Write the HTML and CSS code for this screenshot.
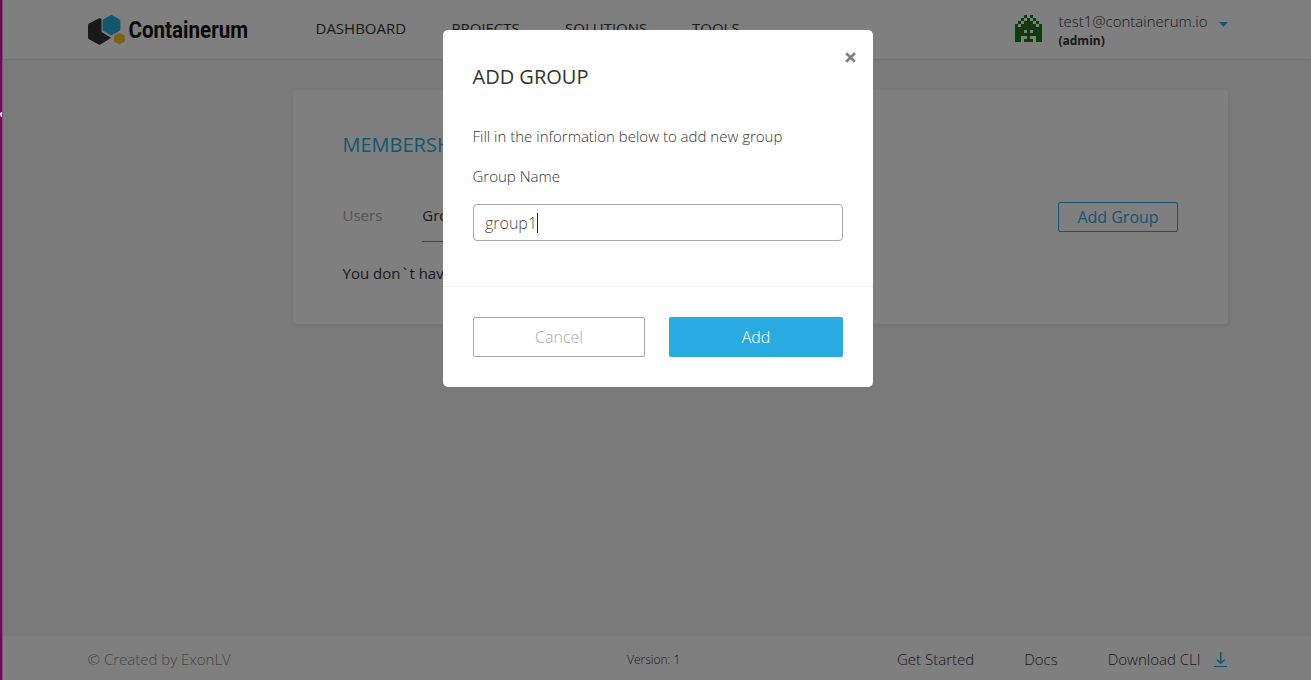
FILE: index.html
```
<!DOCTYPE html>
<html lang="en">
<head>
<meta charset="utf-8">
<title>Containerum</title>
<link rel="stylesheet" href="styles.css">
</head>
<body>
<div class="screen">
  <div class="edge"><span class="edge-mark"></span></div>
  <div class="app">
    <header class="header">
      <div class="container header-row">
        <svg class="logo" width="162" height="34" viewBox="0 0 162 34">
          <path d="M1 8.6 11.5 3 13.5 4V17L23.2 22.8 11.7 30 1 24.3Q0 23.7 0 22.6V10.3Q0 9.200 1 8.600Z" fill="#333"/>
          <path d="M22.500.3Q23.400-.1 24.300.3L31.300 4.200Q32.300 4.800 32.300 5.800V14.500Q32.300 15.500 31.300 16.100L24.300 20Q23.400 20.400 22.500 20L15.500 16.100Q14.600 15.500 14.600 14.500V5.800Q14.600 4.800 15.500 4.200Z" fill="#29abe2"/>
          <path d="M31.500 17.700 36.800 20.700V26.500L31.500 29.400 26 26.500V20.700Z" fill="#fbc52d"/>
          <text class="logo-text" x="40.500" y="23.300" textLength="119.500" lengthAdjust="spacingAndGlyphs">Containerum</text>
        </svg>
        <nav class="nav">
          <a class="nav-dashboard">DASHBOARD</a><a class="nav-projects">PROJECTS</a><a class="nav-solutions">SOLUTIONS</a><a>TOOLS</a>
        </nav>
        <div class="account">
          <svg class="avatar" width="27" height="27" viewBox="0 0 9 9" shape-rendering="crispEdges">
            <path fill="#0b820b" d="M3 0h1v1H3zM5 0h1v1H5zM2 1h1v1H2zM4 1h1v1H4zM6 1h1v1H6zM1 2h1v1H1zM3 2h3v1H3zM7 2h1v1H7zM0 3h1v1H0zM2 3h5v1H2zM8 3h1v1H8zM0 4h4v1H0zM4 4h1v1H4zM5 4h4v1H5zM0 5h3v1H0zM4 5h1v1H4zM6 5h3v1H6zM0 6h9v1H0zM0 7h2v1H0zM4 7h1v1H4zM7 7h2v1H7zM0 8h2v1H0zM3 8h3v1H3zM7 8h2v1H7z"/>
            <path fill="#c8145a" d="M4 2h1v2H4zM2 5h1v1H2zM6 5h1v1H6zM4 8h1v1H4z"/>
          </svg>
          <div class="user"><div class="email">test1@containerum.io</div><div class="role">(admin)</div></div>
          <svg class="caret" width="9" height="5" viewBox="0 0 9 5"><path d="M0 0H9L4.500 4.800Z" fill="#29abe2"/></svg>
        </div>
      </div>
    </header>
    <main class="main">
      <section class="card">
        <h1 class="card-title">MEMBERSHIP</h1>
        <div class="tabs-row">
          <div class="tabs"><span class="tab">Users</span><span class="tab tab-active">Groups</span></div>
          <button class="add-group">Add Group</button>
        </div>
        <p class="empty">You don<span class="tick">`</span>t have groups</p>
      </section>
    </main>
    <footer class="footer">
      <div class="container footer-row">
        <div class="copyright">© Created by ExonLV</div>
        <div class="version">Version: 1</div>
        <div class="links"><a>Get Started</a><a>Docs</a><a class="download">Download CLI
          <svg class="download-icon" width="13" height="15" viewBox="0 0 13 15" fill="none" stroke="#29abe2"><path d="M6.800 0V11" stroke-width="1.700"/><path d="M3 7.700 6.800 11.300 10.600 7.700" stroke-width="1.500"/><path d="M0 14.500H13" stroke-width="1"/></svg></a></div>
      </div>
    </footer>
    <div class="overlay">
      <div class="modal">
        <div class="modal-body">
          <svg class="close" width="11" height="11" viewBox="0 0 11 11"><path d="M1.200 1.200 9.800 9.800M9.800 1.200 1.200 9.800" stroke="#808080" stroke-width="2.700"/></svg>
          <h2 class="modal-title">ADD GROUP</h2>
          <p class="hint">Fill in the information below to add new group</p>
          <label class="label">Group Name</label>
          <div class="input"><span>group1</span><i class="cursor"></i></div>
        </div>
        <div class="modal-footer"><button class="btn cancel">Cancel</button><button class="btn add">Add</button></div>
      </div>
    </div>
  </div>
</div>
</body>
</html>
```
FILE: styles.css
```
* { box-sizing: border-box; }
body { margin: 0; font-family: "Open Sans", sans-serif; font-size: 15px; font-weight: 300; color: #333; overflow: hidden; }
h1, h2, p { margin: 0; font-weight: 400; }
button { font-family: inherit; font-weight: 300; margin: 0; padding: 0 0 0 1px; }
.screen { display: flex; width: 1312px; height: 680px; }
.edge { flex: none; width: 3px; background: linear-gradient(90deg, #6a0b5b 2px, #8b4d81 2px); padding-top: 112px; }
.edge-mark { display: block; width: 2px; height: 5px; background: #e8e0e8; border-radius: 2px 0 0 2px; }
.app { position: relative; flex: none; width: 1309px; height: 680px; display: flex; flex-direction: column; background: #f5f5f5; }
.container { width: 1140px; margin: 0 auto; }
.header { height: 59px; background: #fff; box-shadow: 0 0 2px rgba(0, 0, 0, .2); }
.header-row { display: flex; height: 59px; align-items: flex-start; }
.logo { margin-top: 15px; flex: none; overflow: visible; }
.logo-text { font-family: Roboto, sans-serif; font-size: 23px; font-weight: 700; fill: #111; }
.nav { display: flex; margin: 18px 0 0 66px; line-height: 21px; font-weight: 400; }
.nav-dashboard { width: 136px; }
.nav-projects { width: 113.500px; }
.nav-solutions { width: 127px; }
.account { display: flex; margin-left: auto; align-items: flex-start; }
.avatar { margin: 15px 16px 0 0; }
.user { padding-top: 11px; }
.email { line-height: 21px; }
.role { font-size: 12px; font-weight: 700; line-height: 17px; }
.caret { margin: 22px 0 0 11px; }
.main { flex: 1; width: 1140px; margin: 0 auto; padding: 31px 0 0 205px; }
.card { width: 935px; height: 234px; background: #fff; border-radius: 4px; box-shadow: 1px 2px 4px rgba(0, 0, 0, .07); padding: 41px 50px 0; }
.card-title { color: #29abe2; font-size: 20px; line-height: 28px; }
.tabs-row { display: flex; justify-content: space-between; height: 81px; padding-top: 43px; }
.tabs { display: flex; gap: 40px; height: 37px; margin-top: 3px; font-weight: 400; }
.tab { height: 37px; line-height: 21px; color: #aaa; }
.tab-active { color: #333; border-bottom: 1px solid #29abe2; }
.add-group { width: 120px; height: 30px; border: 1px solid #29abe2; border-radius: 2px; color: #29abe2; background: none; font-size: 16px; font-weight: 400; }
.empty { margin-top: 23px; line-height: 21px; }
.tick { display: inline-block; width: 9px; text-align: center; }
.footer { height: 44px; background: #fff; }
.footer-row { display: flex; height: 44px; align-items: center; padding-bottom: 6px; }
.copyright { width: 539.500px; color: #888; padding-top: 8px; }
.version { font-size: 12px; padding-top: 8px; }
.links { display: flex; gap: 50px; margin-left: auto; padding-top: 8px; }
.download { display: flex; align-items: center; gap: 13px; }
.download-icon { margin-right: 1px; }
.overlay { position: absolute; inset: 0; background: rgba(0, 0, 0, .5); }
.modal { width: 430px; height: 357px; margin: 30px auto 0; background: #fff; border-radius: 5px; }
.modal-body { position: relative; height: 257px; padding: 33px 30px 0; border-bottom: 1px solid #eee; }
.close { position: absolute; right: 17px; top: 22px; }
.modal-title { font-size: 20px; line-height: 28px; }
.hint { margin-top: 35px; line-height: 21px; font-weight: 300; }
.label { display: block; margin-top: 19px; line-height: 21px; }
.input { display: flex; align-items: center; height: 37px; margin-top: 17px; padding-left: 11.500px; border: 1px solid #a6a6a6; border-radius: 4px; font-size: 16px; color: #4a4a4a; }
.cursor { width: 1px; height: 20px; margin-left: -.5px; background: #222; }
.modal-footer { display: flex; justify-content: space-between; padding: 30px 30px 0; }
.btn { height: 40px; border-radius: 2px; font-size: 16px; }
.cancel { width: 172px; border: 1px solid #a6a6a6; background: #fff; color: #aaa; }
.add { width: 174px; border: 0; background: #29abe2; color: #fff; }
```
